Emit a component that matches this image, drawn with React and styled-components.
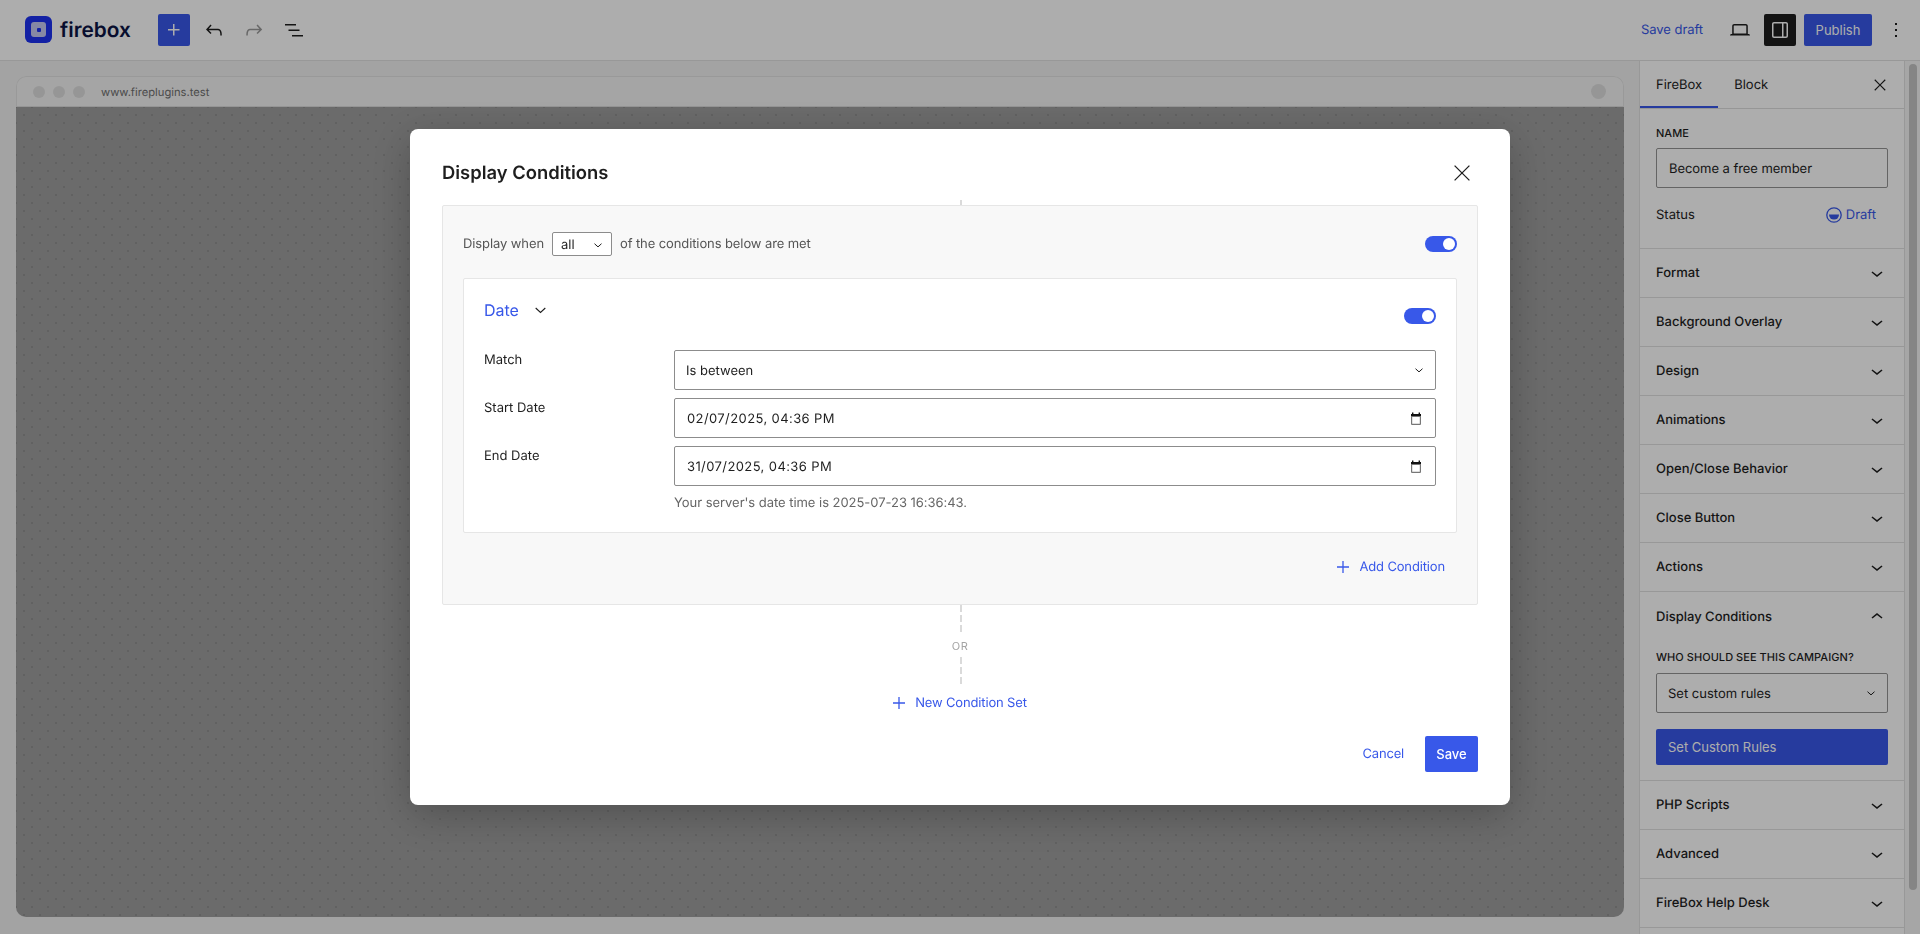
import styled, { createGlobalStyle } from "styled-components";

const Global = createGlobalStyle`
  html, body {
    margin: 0;
    height: 100%;
    overflow: hidden;
    background: #fff;
  }
  * {
    box-sizing: border-box;
  }
  body {
    font-family: Inter, "Liberation Sans", sans-serif;
    font-size: 13px;
    color: #1e1e1e;
    text-rendering: geometricPrecision;
  }
`;

const Page = styled.div`
  height: 934px;
  display: flex;
  flex-direction: column;
`;

const TopBar = styled.header`
  height: 61px;
  flex: none;
  display: flex;
  align-items: center;
  padding: 0 8px 1px 25px;
  background: #fff;
  border-bottom: 1px solid #e0e0e0;
`;

const Logo = styled.div`
  display: flex;
  align-items: center;
  gap: 8px;
  width: 133px;
`;

const LogoMark = styled.div`
  width: 27px;
  height: 27px;
  border-radius: 6px;
  background: #1c32f2;
  display: flex;
  align-items: center;
  justify-content: center;
`;

const LogoInner = styled.div`
  width: 15px;
  height: 15px;
  border-radius: 3px;
  background: #c6cbf2;
  display: flex;
  align-items: center;
  justify-content: center;

  &::after {
    content: "";
    width: 4px;
    height: 4px;
    border-radius: 1px;
    background: #1c32f2;
  }
`;

const LogoText = styled.span`
  padding-top: 1px;
  font-size: 20.8px;
  font-weight: 600;
  color: #0c1445;
`;

const BarGroup = styled.div`
  display: flex;
  align-items: center;
  gap: ${(p) => p.$gap || 8}px;
`;

const Spacer = styled.div`
  flex: 1;
`;

const BarButton = styled.button`
  width: 32px;
  height: 32px;
  padding: 0;
  border: none;
  border-radius: 2px;
  display: flex;
  align-items: center;
  justify-content: center;
  background: ${(p) => (p.$tone === "primary" ? "#3858e9" : p.$tone === "dark" ? "#1e1e1e" : "transparent")};
  color: ${(p) => (p.$tone === "primary" || p.$tone === "dark" ? "#fff" : p.$muted ? "#9a9a9a" : "#1e1e1e")};
`;

const SaveDraft = styled.span`
  color: #3858e9;
  margin-right: 21px;
  letter-spacing: -0.05px;
`;

const Publish = styled.button`
  width: 68px;
  height: 32px;
  border: none;
  border-radius: 2px;
  background: #3858e9;
  color: #fff;
  font: inherit;
`;

const Glyph = styled.svg`
  width: ${(p) => p.$size || 24}px;
  height: ${(p) => p.$size || 24}px;
  flex: none;
  fill: currentColor;
`;

const Main = styled.div`
  flex: 1;
  display: flex;
  min-height: 0;
`;

const Gutter = styled.main`
  flex: 1;
  padding: 15px 15px 17px 16px;
  background: #f0f0f0;
`;

const Frame = styled.div`
  height: 100%;
  display: flex;
  flex-direction: column;
  border-radius: 10px;
  overflow: hidden;
`;

const FrameHead = styled.div`
  height: 31px;
  flex: none;
  display: flex;
  align-items: center;
  gap: 8px;
  padding: 0 17px 0 16px;
  background: #f4f4f4;
  border: 1px solid #e2e2e2;
  border-bottom: 1px solid #dcdcdc;
  border-radius: 10px 10px 0 0;
`;

const Dot = styled.span`
  width: ${(p) => p.$size || 12}px;
  height: ${(p) => p.$size || 12}px;
  border-radius: 50%;
  background: #dedede;
`;

const FrameUrl = styled.span`
  font-size: 11.2px;
  color: #707070;
  margin-left: 8px;
  flex: 1;
`;

const Canvas = styled.div`
  flex: 1;
  background-color: #9e9e9e;
  background-image: radial-gradient(circle, #8f8f8f 0.7px, transparent 1px),
    radial-gradient(circle, #8f8f8f 0.7px, transparent 1px);
  background-size: 16px 16px;
  background-position: 0 0, 8px 8px;
`;

const Sidebar = styled.aside`
  width: 266px;
  flex: none;
  background: #fff;
  border-left: 1px solid #e0e0e0;
  border-right: 1px solid #e0e0e0;
  overflow: hidden;
`;

const Tabs = styled.div`
  height: 48px;
  display: flex;
  align-items: flex-start;
  border-bottom: 1px solid #ddd;
`;

const Tab = styled.div`
  display: flex;
  align-items: center;
  padding: 0 16px;
  box-shadow: ${(p) => (p.$active ? "inset 0 -2px 0 #3858e9" : "none")};
  height: 47px;
`;

const TabClose = styled.div`
  margin-left: auto;
  width: 48px;
  height: 47px;
  display: flex;
  align-items: center;
  justify-content: center;
`;

const Summary = styled.section`
  height: 140px;
  padding: 17px 16px 0;
  border-bottom: 1px solid #e0e0e0;
`;

const SmallCaps = styled.div`
  font-size: 11px;
  font-weight: 450;
  line-height: 14px;
  letter-spacing: 0.05px;
  text-transform: uppercase;
  margin-top: ${(p) => p.$top || 0}px;
  margin-bottom: ${(p) => p.$gap || 8}px;
`;

const SideInput = styled.div`
  height: 40px;
  display: flex;
  align-items: center;
  padding: 1px 12px 0;
  border: 1px solid #949494;
  border-radius: 2px;
  letter-spacing: -0.05px;
`;

const StatusRow = styled.div`
  display: flex;
  align-items: center;
  justify-content: space-between;
  height: 20px;
  margin-top: 17px;
  padding-right: 12px;
`;

const Draft = styled.span`
  display: flex;
  align-items: center;
  gap: 4px;
  color: #3858e9;
`;

const PanelRow = styled.div`
  height: 49px;
  display: flex;
  align-items: center;
  justify-content: space-between;
  padding: 0 15px 0 16px;
  font-weight: 450;
  border-bottom: 1px solid #e0e0e0;
`;

const OpenSection = styled.div`
  height: 189px;
  padding: 0 16px;
  border-bottom: 1px solid #e0e0e0;
`;

const OpenHead = styled.div`
  height: 49px;
  margin-right: -1px;
  display: flex;
  align-items: center;
  justify-content: space-between;
  font-weight: 450;
`;

const SideSelect = styled.div`
  height: 40px;
  display: flex;
  align-items: center;
  justify-content: space-between;
  padding: 1px 12px 0 11px;
  border: 1px solid #949494;
  border-radius: 2px;
`;

const CustomRules = styled.button`
  width: 100%;
  height: 36px;
  margin-top: 16px;
  padding: 0 12px;
  border: none;
  border-radius: 2px;
  background: #3858e9;
  color: #fff;
  font: inherit;
  text-align: left;
`;

const ScrollTrack = styled.div`
  width: 15px;
  flex: none;
  padding: 3px 3px 0 4px;
  background: #f5f5f5;
`;

const ScrollThumb = styled.div`
  height: 826px;
  border-radius: 4px;
  background: #c4c4c4;
`;

const Overlay = styled.div`
  position: fixed;
  inset: 0;
  display: flex;
  justify-content: center;
  align-items: flex-start;
  padding-top: 129px;
  background: rgba(0, 0, 0, 0.32);
`;

const Modal = styled.div`
  width: 1100px;
  height: 676px;
  padding: 0 32px;
  background: #fff;
  border-radius: 8px;
  box-shadow: 0 10px 40px rgba(0, 0, 0, 0.25);
`;

const ModalHead = styled.div`
  height: 71px;
  padding-top: 17px;
  display: flex;
  align-items: center;
  justify-content: space-between;
`;

const Title = styled.h1`
  margin: 0;
  font-size: 18.4px;
  font-weight: 600;
  color: #1e1e1e;
`;

const ModalClose = styled.svg`
  width: 16px;
  height: 16px;
  margin-right: 8px;
  fill: none;
  stroke: #1e1e1e;
  stroke-width: 1.3;
`;

const Dash = styled.div`
  width: 2px;
  height: ${(p) => p.$h}px;
  margin-left: 518px;
  background-image: linear-gradient(#dadada 66%, transparent 66%);
  background-size: 2px 10px;
`;

const ConditionSet = styled.section`
  height: 400px;
  padding: 20px;
  background: #f8f8f8;
  border: 1px solid #e6e6e6;
  border-radius: 2px;
`;

const SetHead = styled.div`
  height: 38px;
  margin-top: 6px;
  margin-bottom: 8px;
  display: flex;
  align-items: flex-start;
  justify-content: space-between;
`;

const Sentence = styled.div`
  display: flex;
  align-items: center;
  gap: 8px;
  height: 24px;
  letter-spacing: -0.1px;
  color: #555;
`;

const AllSelect = styled.div`
  width: 60px;
  height: 24px;
  padding: 2px 9px 0 8px;
  display: flex;
  align-items: center;
  justify-content: space-between;
  background: #fff;
  border: 1px solid #8c8c8c;
  border-radius: 2px;
  letter-spacing: 0;
  color: #1e1e1e;
`;

const Toggle = styled.div`
  width: 32px;
  height: 16px;
  margin-top: ${(p) => p.$top || 0}px;
  padding: 2px;
  display: flex;
  justify-content: flex-end;
  border-radius: 8px;
  background: #3858e9;

  &::after {
    content: "";
    width: 12px;
    height: 12px;
    border-radius: 50%;
    background: #fff;
  }
`;

const Card = styled.div`
  height: 255px;
  padding: 0 20px;
  background: #fff;
  border: 1px solid #e6e6e6;
  border-radius: 2px;
`;

const CardHead = styled.div`
  height: 71px;
  display: flex;
  justify-content: space-between;
  align-items: flex-start;
`;

const ConditionName = styled.div`
  margin-top: 20px;
  height: 22px;
  display: flex;
  align-items: center;
  gap: 16px;
  font-size: 16px;
  color: #3858e9;
`;

const Chevron = styled.svg`
  width: ${(p) => p.$w}px;
  height: ${(p) => p.$h}px;
  flex: none;
  fill: none;
  stroke: #1e1e1e;
  stroke-width: ${(p) => p.$stroke || 1};
`;

const Fields = styled.div`
  display: grid;
  grid-template-columns: 190px 1fr;
  row-gap: 8px;
`;

const FieldLabel = styled.div`
  padding-top: 1px;
  line-height: 18px;
`;

const Control = styled.div`
  height: 40px;
  display: flex;
  align-items: center;
  justify-content: space-between;
  padding: 1px ${(p) => p.$pr || 12}px 0 ${(p) => p.$pl || 11}px;
  border: 1px solid #8c8c8c;
  border-radius: 2px;
  letter-spacing: ${(p) => (p.$spaced ? "0.4px" : "0")};
  background: #fff;
`;

const Help = styled.div`
  grid-column: 2;
  margin-top: 1px;
  letter-spacing: -0.04px;
  color: #666;
`;

const AddRow = styled.div`
  margin-top: 24px;
  padding-right: 12px;
  display: flex;
  justify-content: flex-end;
`;

const TextAction = styled.span`
  display: flex;
  align-items: center;
  gap: 10px;
  height: 20px;
  letter-spacing: -0.15px;
  color: #3858e9;
`;

const OrLabel = styled.div`
  height: 22px;
  line-height: 22px;
  text-align: center;
  font-size: 11px;
  letter-spacing: 0.5px;
  color: #a4a4a4;
`;

const NewSetRow = styled.div`
  margin-top: 8px;
  display: flex;
  justify-content: center;
`;

const ModalFoot = styled.div`
  margin-top: 23px;
  display: flex;
  justify-content: flex-end;
  align-items: center;
  gap: 21px;
`;

const Cancel = styled.span`
  letter-spacing: -0.2px;
  color: #3858e9;
`;

const Save = styled.button`
  width: 53px;
  height: 36px;
  border: none;
  border-radius: 2px;
  background: #3858e9;
  color: #fff;
  font: inherit;
  font-weight: 500;
`;

const PlusThin = styled.svg`
  width: 12px;
  height: 12px;
  flex: none;
  fill: none;
  stroke: currentColor;
  stroke-width: 1.3;
`;

const Plus = () => (
  <Glyph viewBox="0 0 24 24">
    <path d="M11 12.5V17.5H12.5V12.5H17.5V11H12.5V6H11V11H6V12.5H11Z" />
  </Glyph>
);

const AddIcon = () => (
  <PlusThin viewBox="0 0 12 12">
    <path d="M6 0v12M0 6h12" />
  </PlusThin>
);

const Close = ({ size = 24 }) => (
  <Glyph $size={size} viewBox="0 0 24 24">
    <path d="m13.06 12 6.47-6.47-1.06-1.06L12 10.94 5.53 4.47 4.47 5.53 10.94 12l-6.47 6.47 1.06 1.06L12 13.06l6.47 6.47 1.06-1.06L13.06 12Z" />
  </Glyph>
);

const Down = () => (
  <Glyph viewBox="0 0 24 24">
    <path d="M17.5 11.6L12 16l-5.5-4.4.9-1.2L12 14l4.5-3.6 1 1.2z" />
  </Glyph>
);

const Up = () => (
  <Glyph viewBox="0 0 24 24">
    <path d="M6.5 12.4L12 8l5.5 4.4-.9 1.2L12 10l-4.5 3.6-1-1.2z" />
  </Glyph>
);

const SmallDown = ({ w = 8, h = 5, stroke = 1 }) => (
  <Chevron $w={w} $h={h} $stroke={stroke} viewBox="0 0 8 5">
    <path d="M.5.7 4 3.9 7.5.7" />
  </Chevron>
);

const Calendar = () => (
  <Glyph $size={14} viewBox="0 0 14 14">
    <path d="M3 0.5h1.4V2h5.2V0.5H11V2h1v3H2V2h1z" fill="#111" />
    <path d="M2.6 4.5h8.8v7.4a.5.5 0 0 1-.5.5H3.1a.5.5 0 0 1-.5-.5z" fill="none" stroke="#777" strokeWidth="1.2" />
  </Glyph>
);

const closedBefore = ["Format", "Background Overlay", "Design", "Animations", "Open/Close Behavior", "Close Button", "Actions"];
const closedAfter = ["PHP Scripts", "Advanced", "FireBox Help Desk"];

const App = () => {
  return (
    <Page>
      <Global />
      <TopBar>
        <Logo>
          <LogoMark>
            <LogoInner />
          </LogoMark>
          <LogoText>firebox</LogoText>
        </Logo>
        <BarGroup>
          <BarButton $tone="primary">
            <Plus />
          </BarButton>
          <BarButton>
            <Glyph viewBox="0 0 24 24">
              <path d="M18.3 11.7c-.6-.6-1.4-.9-2.3-.9H6.7l2.9-3.3-1.1-1-4.5 5L8.5 16l1-1-2.7-2.7H16c.5 0 .9.2 1.3.5 1 1 1 3.4 1 4.5v.3h1.5v-.2c0-1.5 0-4.3-1.5-5.7z" />
            </Glyph>
          </BarButton>
          <BarButton $muted>
            <Glyph viewBox="0 0 24 24">
              <path d="M15.6 6.5l-1.1 1 2.9 3.3H8c-.9 0-1.7.3-2.3.9-1.4 1.5-1.4 4.2-1.4 5.6v.2h1.5v-.3c0-1.1 0-3.5 1-4.5.3-.3.7-.5 1.3-.5h9.2L14.5 15l1.1 1.1 4.6-4.6-4.6-5z" />
            </Glyph>
          </BarButton>
          <BarButton>
            <Glyph viewBox="0 0 24 24">
              <path d="M3 6h11v1.5H3V6Zm3.5 5.5h11V13h-11v-1.5ZM21 17H10v1.5h11V17Z" />
            </Glyph>
          </BarButton>
        </BarGroup>
        <Spacer />
        <SaveDraft>Save draft</SaveDraft>
        <BarGroup>
          <BarButton>
            <Glyph viewBox="0 0 24 24">
              <path d="M20.5 16h-.7V8c0-1.1-.9-2-2-2H6.2c-1.1 0-2 .9-2 2v8h-.7c-.8 0-1.5.7-1.5 1.5h20c0-.8-.7-1.5-1.5-1.5zM5.7 8c0-.3.2-.5.5-.5h11.6c.3 0 .5.2.5.5v7.6H5.7V8z" />
            </Glyph>
          </BarButton>
          <BarButton $tone="dark">
            <Glyph viewBox="0 0 24 24">
              <path d="M18 4H6c-1.1 0-2 .9-2 2v12c0 1.1.9 2 2 2h12c1.1 0 2-.9 2-2V6c0-1.1-.9-2-2-2zm-4 14.5H6c-.3 0-.5-.2-.5-.5V6c0-.3.2-.5.5-.5h8v13zm4.5-.5c0 .3-.2.5-.5.5h-2.5v-13H18c.3 0 .5.2.5.5v12z" />
            </Glyph>
          </BarButton>
          <Publish>Publish</Publish>
          <BarButton>
            <Glyph viewBox="0 0 24 24">
              <path d="M13 19h-2v-2h2v2zm0-6h-2v-2h2v2zm0-6h-2V5h2v2z" />
            </Glyph>
          </BarButton>
        </BarGroup>
      </TopBar>

      <Main>
        <Gutter>
          <Frame>
            <FrameHead>
              <Dot />
              <Dot />
              <Dot />
              <FrameUrl>www.fireplugins.test</FrameUrl>
              <Dot $size={15} />
            </FrameHead>
            <Canvas />
          </Frame>
        </Gutter>

        <Sidebar>
          <Tabs>
            <Tab $active>FireBox</Tab>
            <Tab>Block</Tab>
            <TabClose>
              <Close size={18} />
            </TabClose>
          </Tabs>
          <Summary>
            <SmallCaps>Name</SmallCaps>
            <SideInput>Become a free member</SideInput>
            <StatusRow>
              <span>Status</span>
              <Draft>
                <Glyph $size={16} viewBox="0 0 16 16">
                  <circle cx="8" cy="8" r="7.2" fill="none" stroke="currentColor" strokeWidth="1.3" />
                  <path d="M3 7.6h10a5 5 0 0 1-10 0z" />
                </Glyph>
                Draft
              </Draft>
            </StatusRow>
          </Summary>
          {closedBefore.map((name) => (
            <PanelRow key={name}>
              {name}
              <Down />
            </PanelRow>
          ))}
          <OpenSection>
            <OpenHead>
              Display Conditions
              <Up />
            </OpenHead>
            <SmallCaps $top={9} $gap={9}>Who should see this campaign?</SmallCaps>
            <SideSelect>
              Set custom rules
              <SmallDown />
            </SideSelect>
            <CustomRules>Set Custom Rules</CustomRules>
          </OpenSection>
          {closedAfter.map((name) => (
            <PanelRow key={name}>
              {name}
              <Down />
            </PanelRow>
          ))}
        </Sidebar>

        <ScrollTrack>
          <ScrollThumb />
        </ScrollTrack>
      </Main>

      <Overlay>
        <Modal>
          <ModalHead>
            <Title>Display Conditions</Title>
            <ModalClose viewBox="0 0 16 16">
              <path d="M.6.6l14.8 14.8M15.4.6.6 15.4" />
            </ModalClose>
          </ModalHead>
          <Dash $h={5} />
          <ConditionSet>
            <SetHead>
              <Sentence>
                Display when
                <AllSelect>
                  all
                  <SmallDown />
                </AllSelect>
                of the conditions below are met
              </Sentence>
              <Toggle $top={4} />
            </SetHead>
            <Card>
              <CardHead>
                <ConditionName>
                  Date
                  <SmallDown w={11} h={7} stroke={0.8} />
                </ConditionName>
                <Toggle $top={29} />
              </CardHead>
              <Fields>
                <FieldLabel>Match</FieldLabel>
                <Control>
                  Is between
                  <SmallDown />
                </Control>
                <FieldLabel>Start Date</FieldLabel>
                <Control $spaced $pl={12} $pr={12}>
                  02/07/2025, 04:36 PM
                  <Calendar />
                </Control>
                <FieldLabel>End Date</FieldLabel>
                <Control $spaced $pl={12} $pr={12}>
                  31/07/2025, 04:36 PM
                  <Calendar />
                </Control>
                <Help>Your server's date time is 2025-07-23 16:36:43.</Help>
              </Fields>
            </Card>
            <AddRow>
              <TextAction>
                <AddIcon />
                Add Condition
              </TextAction>
            </AddRow>
          </ConditionSet>
          <Dash $h={30} />
          <OrLabel>OR</OrLabel>
          <Dash $h={28} />
          <NewSetRow>
            <TextAction>
              <AddIcon />
              New Condition Set
            </TextAction>
          </NewSetRow>
          <ModalFoot>
            <Cancel>Cancel</Cancel>
            <Save>Save</Save>
          </ModalFoot>
        </Modal>
      </Overlay>
    </Page>
  );
};

export default App;
